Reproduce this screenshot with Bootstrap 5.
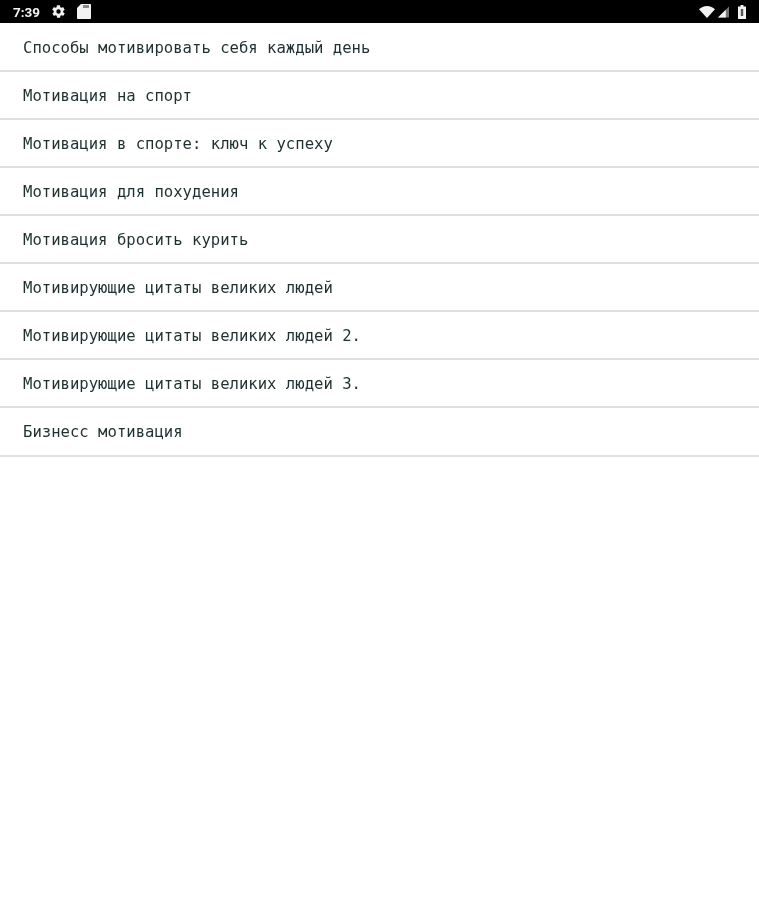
<!DOCTYPE html>
<html lang="ru">
<head>
  <meta charset="UTF-8" />
  <meta name="viewport" content="width=device-width, initial-scale=1.0"/>
  <title>Мотивация</title>
  <link href="https://cdn.jsdelivr.net/npm/bootstrap@5.3.3/dist/css/bootstrap.min.css" rel="stylesheet" />
  <style>
    body {
      background-color: #fff;
      font-family: "DejaVu Sans Mono", "Liberation Mono", monospace;
    }
    .status-strip {
      height: 23px;
      background: #000;
      color: #f2f2f2;
      padding: 0 13px;
      font-family: Roboto, sans-serif;
      font-size: 13.5px;
      font-weight: 700;
    }
    .status-left, .status-right { filter: blur(.6px); }
    .status-time { padding-top: 1px; }
    .status-gear { margin-left: 11px; }
    .status-card { margin-left: 11px; }
    .status-signal { margin-left: 3px; }
    .status-battery { margin-left: 9px; }
    .topic-list .list-group-item {
      height: 48px;
      padding: 0 0 0 23px;
      border-color: #e0e0e0;
      border-width: 0 0 2px 0;
      color: #1f3030;
      font-size: 15.6px;
      line-height: 49px;
      white-space: pre;
    }
    .topic-list .list-group-item:first-child { height: 49px; line-height: 50px; }
    .topic-list .list-group-item:last-child { height: 49px; border-bottom-width: 2px; }
    .topic-text { display: block; filter: blur(.6px); }
  </style>
</head>
<body>
<div class="status-strip d-flex align-items-center justify-content-between">
  <div class="status-left d-flex align-items-center">
    <span class="status-time">7:39</span>
    <svg class="status-gear" width="15" height="15" viewBox="0 0 24 24" fill="#f2f2f2"><path fill-rule="evenodd" d="M19.4 13c.1-.3.1-.7.1-1s0-.7-.1-1l2.100-1.600c.2-.2.2-.4.1-.6l-2-3.500c-.1-.2-.4-.3-.6-.2l-2.500 1c-.5-.4-1.100-.7-1.700-1l-.4-2.600c0-.3-.2-.5-.5-.5h-4c-.3 0-.5.2-.5.4l-.4 2.700c-.6.3-1.200.6-1.700 1l-2.500-1c-.2-.1-.5 0-.6.2l-2 3.500c-.1.2-.1.5.1.6L4.600 11c-.1.3-.1.7-.1 1s0 .7.1 1l-2.100 1.600c-.2.2-.2.4-.1.6l2 3.500c.1.2.4.3.6.2l2.500-1c.5.4 1.100.7 1.700 1l.4 2.600c0 .3.2.5.5.5h4c.3 0 .5-.2.5-.4l.4-2.700c.6-.3 1.200-.6 1.700-1l2.500 1c.2.1.5 0 .6-.2l2-3.500c.1-.2.1-.5-.1-.6zM12 15.500a3.500 3.500 0 1 1 0-7 3.500 3.500 0 0 1 0 7z"/></svg>
    <svg class="status-card" width="14" height="15" viewBox="0 0 14 15"><path d="M4 0h9c.6 0 1 .4 1 1v13c0 .6-.4 1-1 1H1c-.6 0-1-.4-1-1V4z" fill="#f2f2f2"/><rect x="6" y="1" width="6" height="3" fill="#8a8a8a"/></svg>
  </div>
  <div class="status-right d-flex align-items-center">
    <svg width="16" height="12" viewBox="0 0 24 18" fill="#f2f2f2"><path d="M12 18 0 5c3-3 7.300-5 12-5s9 2 12 5z"/></svg>
    <svg class="status-signal" width="11" height="12" viewBox="0 0 24 24"><path d="M0 24 24 0v24z" fill="#777"/><path d="M0 24 17 7v17z" fill="#f2f2f2"/></svg>
    <svg class="status-battery" width="8" height="14" viewBox="0 0 8 14"><path d="M2.500 0h3v1.500H8V14H0V1.500h2.500z" fill="#f2f2f2"/><rect x="2.800" y="4" width="2.400" height="7" fill="#555"/></svg>
  </div>
</div>
<div class="list-group list-group-flush topic-list">
  <div class="list-group-item"><span class="topic-text">Способы мотивировать себя каждый день</span></div>
  <div class="list-group-item"><span class="topic-text">Мотивация на спорт</span></div>
  <div class="list-group-item"><span class="topic-text">Мотивация в спорте: ключ к успеху</span></div>
  <div class="list-group-item"><span class="topic-text">Мотивация для похудения</span></div>
  <div class="list-group-item"><span class="topic-text">Мотивация бросить курить</span></div>
  <div class="list-group-item"><span class="topic-text">Мотивирующие цитаты великих людей</span></div>
  <div class="list-group-item"><span class="topic-text">Мотивирующие цитаты великих людей 2.</span></div>
  <div class="list-group-item"><span class="topic-text">Мотивирующие цитаты великих людей 3.</span></div>
  <div class="list-group-item"><span class="topic-text">Бизнесс мотивация</span></div>
</div>
<script src="https://cdn.jsdelivr.net/npm/bootstrap@5.3.3/dist/js/bootstrap.bundle.min.js"></script>
</body>
</html>
